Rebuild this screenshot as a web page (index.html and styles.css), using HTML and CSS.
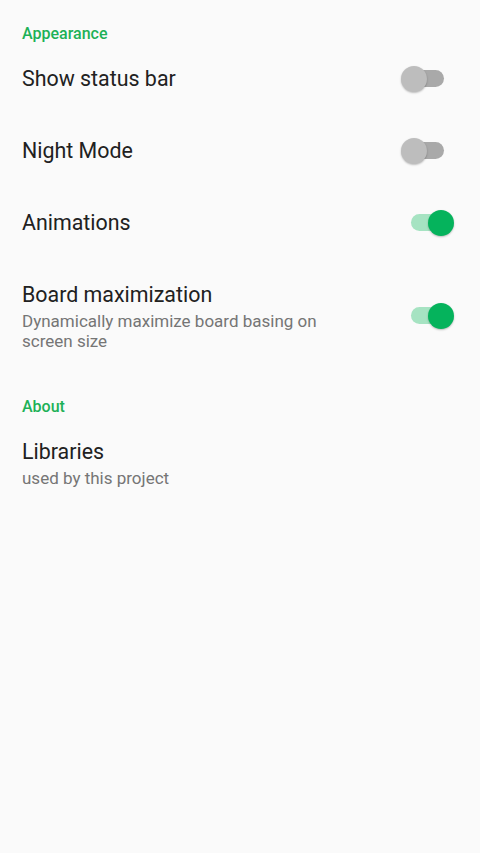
FILE: index.html
```html
<!DOCTYPE html>
<html>
<head>
<meta charset="utf-8">
<link rel="stylesheet" href="styles.css">
</head>
<body>
<div class="screen">
  <div class="category">Appearance</div>
  <div class="pref">
    <div class="text"><div class="title">Show status bar</div></div>
    <div class="widget"><div class="switch"><div class="track"></div><div class="thumb"></div></div></div>
  </div>
  <div class="pref">
    <div class="text"><div class="title">Night Mode</div></div>
    <div class="widget"><div class="switch"><div class="track"></div><div class="thumb"></div></div></div>
  </div>
  <div class="pref">
    <div class="text"><div class="title">Animations</div></div>
    <div class="widget"><div class="switch on"><div class="track"></div><div class="thumb"></div></div></div>
  </div>
  <div class="pref">
    <div class="text"><div class="title">Board maximization</div><div class="summary">Dynamically maximize board basing on screen size</div></div>
    <div class="widget"><div class="switch on"><div class="track"></div><div class="thumb"></div></div></div>
  </div>
  <div class="category">About</div>
  <div class="pref">
    <div class="text"><div class="title">Libraries</div><div class="summary">used by this project</div></div>
  </div>
</div>
</body>
</html>
```
FILE: styles.css
```css
html, body {
  margin: 0;
  padding: 0;
  background: #fafafa;
}
.screen {
  width: 480px;
  height: 853px;
  font-family: Roboto, "Noto Sans", sans-serif;
  background: #fafafa;
}
.category {
  padding: 23px 22px 0;
  height: 20px;
  line-height: 22px;
  font-size: 16px;
  font-weight: 500;
  color: #1db157;
}
.pref {
  display: flex;
  align-items: center;
  padding: 21px 0 22px 22px;
}
.text {
  width: 330px;
  padding-top: 1px;
}
.title {
  font-size: 21.4px;
  line-height: 28px;
  color: #212121;
}
.summary {
  margin-top: 2px;
  font-size: 17px;
  line-height: 20px;
  color: #757575;
}
.widget {
  flex: 1;
  display: flex;
  justify-content: flex-end;
  padding-right: 26px;
}
.switch {
  position: relative;
  width: 53px;
  height: 26px;
}
.track {
  position: absolute;
  left: 10px;
  top: 4.5px;
  width: 33px;
  height: 17px;
  border-radius: 9px;
  background: #a9a9a9;
}
.thumb {
  position: absolute;
  left: 0;
  top: 0;
  width: 26px;
  height: 26px;
  border-radius: 50%;
  background: #bdbdbd;
  box-shadow: 0 1px 2px rgba(0,0,0,0.25);
}
.switch.on .track {
  background: #a6e3c2;
}
.switch.on .thumb {
  left: 27px;
  background: #05b35c;
}
```
